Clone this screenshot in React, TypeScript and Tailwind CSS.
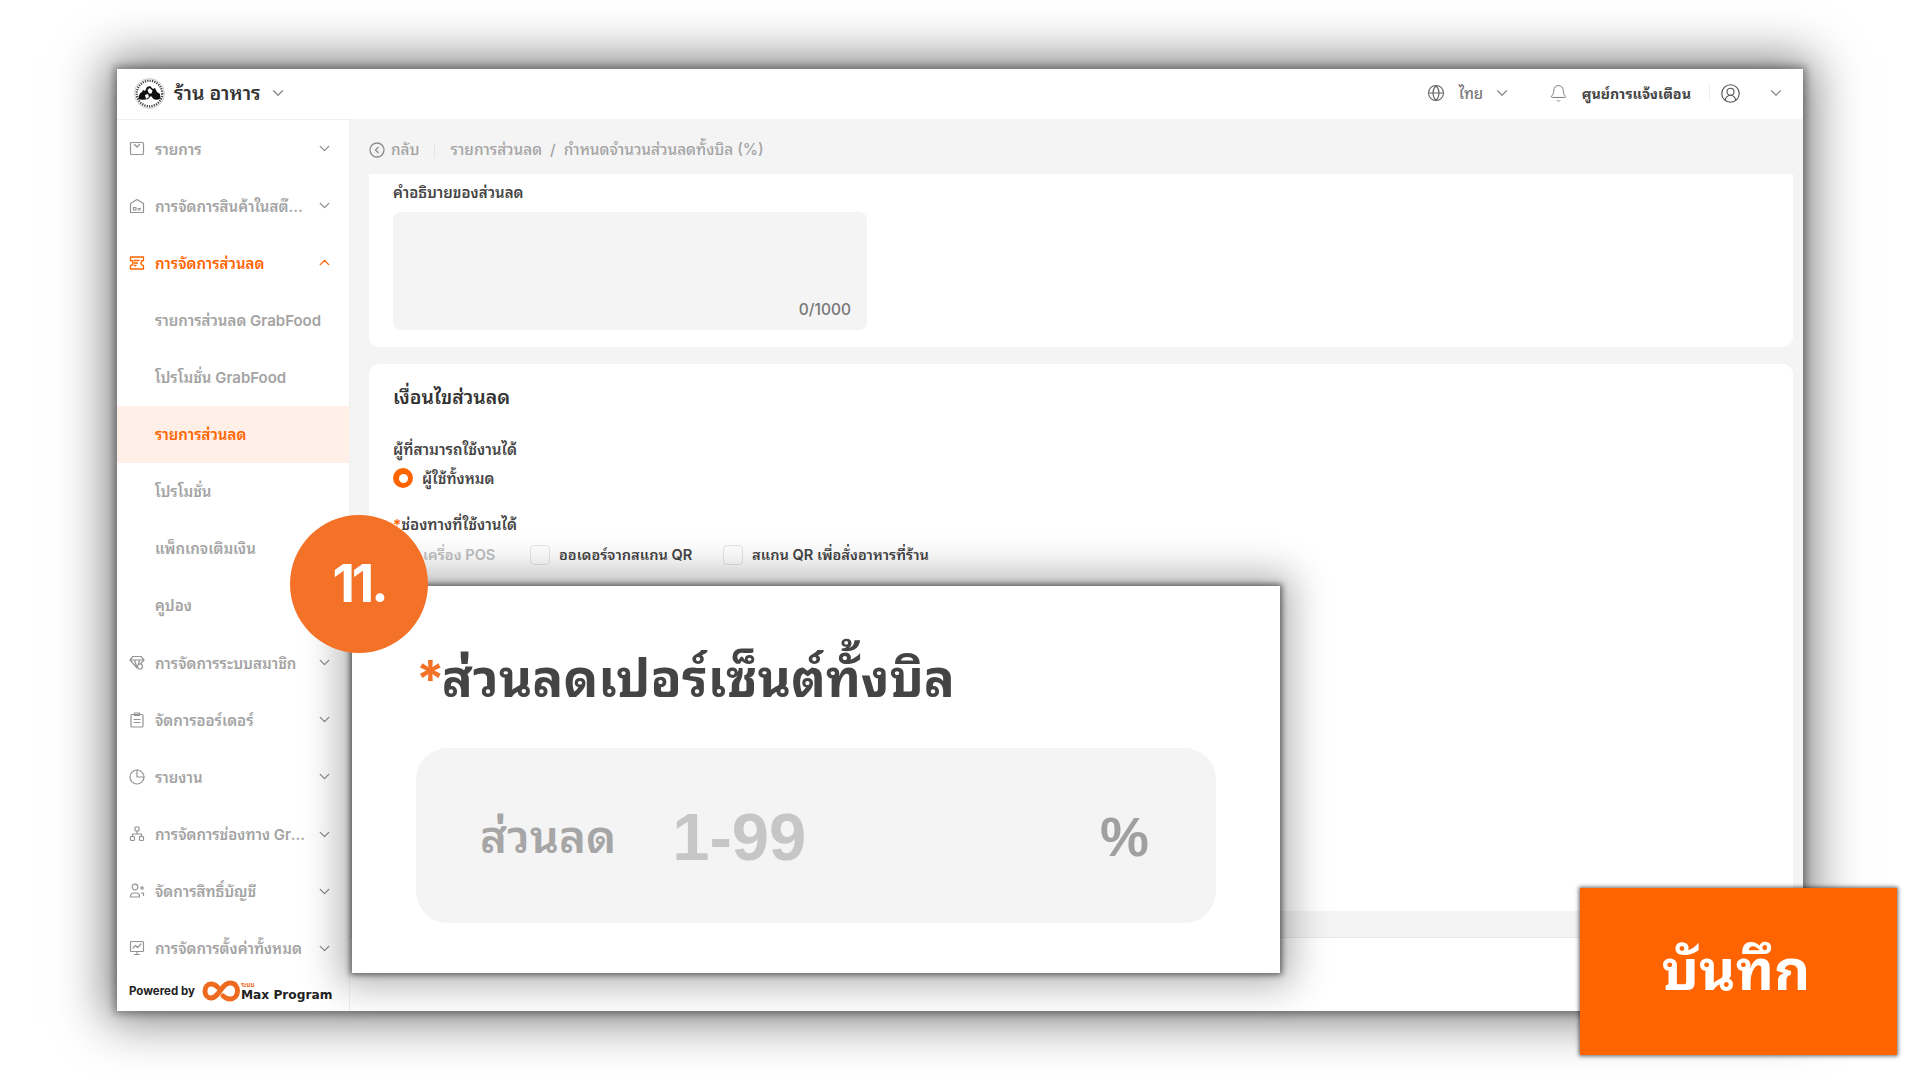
import React from "react";
import { ChevronDown, ChevronUp, Globe, Bell, CircleUserRound } from "lucide-react";

const ic = { width: 16, height: 16, viewBox: "0 0 16 16", fill: "none", stroke: "currentColor", strokeWidth: 1.2, strokeLinecap: "round" as const, strokeLinejoin: "round" as const };

const IconBox = () => (<svg {...ic}><rect x="1.5" y="1.5" width="13" height="12" rx="1" /><path d="M5.5 3.500 8 6l2.500-2.500" /></svg>);
const IconStore = () => (<svg {...ic}><path d="M1.500 5.500 8 1.500l6.500 4v9h-13z" /><path d="M4.500 9.500h2.500v2.500h-2.500zM9 10.500h2.500M9 12h2.500" /></svg>);
const IconTicket = () => (<svg {...ic} strokeWidth={1.3}><path d="M1.500 2h13v3.500a2.500 2.500 0 0 0 0 5V14h-13v-3.500a2.500 2.500 0 0 0 0-5z" /><path d="M5 5.500h5M5 8h3.500M5 10.500h2" /></svg>);
const IconGem = () => (<svg {...ic}><path d="M4 1.500h8l3 3.500-5 5.500-2 2.500L1 5zM1 5h14M5.500 5 8 13M10.500 5 9.500 9" /><circle cx="11" cy="11.500" r="2.500" fill="#fff" /></svg>);
const IconClip = () => (<svg {...ic}><rect x="2" y="2.500" width="12" height="12.500" rx="1" /><path d="M5.500 1h5v2.500h-5zM5 7.500h6M5 10.500h6" /></svg>);
const IconPie = () => (<svg {...ic}><circle cx="8" cy="8" r="7" /><path d="M8 1v7h7" /></svg>);
const IconNet = () => (<svg {...ic}><rect x="6" y="1" width="4" height="4" rx="0.800" /><rect x="1.500" y="10.500" width="4" height="4" rx="0.800" /><rect x="10.500" y="10.500" width="4" height="4" rx="0.800" /><path d="M8 5v3M3.500 10.500V8h9v2.500" /></svg>);
const IconUsers = () => (<svg {...ic}><circle cx="6" cy="4" r="2.800" /><path d="M1.500 14v-1a3 3 0 0 1 3-3h3a3 3 0 0 1 3 3v1z" /><circle cx="13" cy="5" r="1.200" /><path d="M12.500 10h2v2.500" /></svg>);
const IconMon = () => (<svg {...ic}><rect x="1.500" y="1.500" width="13" height="10" rx="1" /><path d="M4 8l2.500-2.500L8.500 7.500l3.500-3.500M5.500 14.500h5M8 11.500v3" /></svg>);

type Item = { label: string; icon?: React.ReactNode; open?: boolean; active?: boolean; sub?: boolean; selected?: boolean };

const items: Item[] = [
  { label: "รายการ", icon: <IconBox /> },
  { label: "การจัดการสินค้าในสต๊อก", icon: <IconStore /> },
  { label: "การจัดการส่วนลด", icon: <IconTicket />, open: true, active: true },
  { label: "รายการส่วนลด GrabFood", sub: true },
  { label: "โปรโมชั่น GrabFood", sub: true },
  { label: "รายการส่วนลด", sub: true, selected: true },
  { label: "โปรโมชั่น", sub: true },
  { label: "แพ็กเกจเติมเงิน", sub: true },
  { label: "คูปอง", sub: true },
  { label: "การจัดการระบบสมาชิก", icon: <IconGem /> },
  { label: "จัดการออร์เดอร์", icon: <IconClip /> },
  { label: "รายงาน", icon: <IconPie /> },
  { label: "การจัดการช่องทาง GrabFood", icon: <IconNet /> },
  { label: "จัดการสิทธิ์บัญชี", icon: <IconUsers /> },
  { label: "การจัดการตั้งค่าทั้งหมด", icon: <IconMon /> },
];

function SideRow({ item }: { item: Item }) {
  if (item.sub) {
    return (
      <div className={`flex h-[57.14px] shrink-0 items-center pl-[38px] text-[15px] font-semibold ${item.selected ? "bg-[#ffefe6] text-[#ff6400]" : "text-[#a3a3a3]"}`}>
        <span className="translate-y-[0.5px]">{item.label}</span>
      </div>
    );
  }
  return (
    <div className={`flex h-[57.14px] shrink-0 items-center pl-[12px] pr-[16px] text-[15px] font-semibold ${item.active ? "text-[#ff6400]" : "text-[#a3a3a3]"}`}>
      <span className={`flex w-[26px] shrink-0 ${item.active ? "" : "text-[#949494]"}`}>{item.icon}</span>
      <span className="mr-[10.500px] min-w-0 flex-1 translate-y-[0.5px] truncate leading-[24px]">{item.label}</span>
      {item.open ? <ChevronUp size={17} strokeWidth={1.9} /> : <ChevronDown size={17} strokeWidth={1.9} className="text-[#8c8c8c]" />}
    </div>
  );
}

function Logo() {
  return (
    <svg width="31" height="31" viewBox="0 0 31 31">
      <circle cx="15.500" cy="15.500" r="15" fill="#fff" stroke="#aaa" strokeWidth="0.600" />
      <circle cx="15.500" cy="15.500" r="12.800" fill="none" stroke="#444" strokeWidth="2.200" strokeDasharray="1.300 1.100" />
      <path d="M4.500 21c0-3 1-6 3.500-7l1-2 2 1 2-4 3-1 3 3 2-1 2 4 3 2 .5 4.500c-2.500 1.500-5 1.500-7 .5l-2.500-3-3 3c-3 1-7 1-10.500 0z" fill="#111" />
      <path d="M13.500 12l2-2 3 2.500-1 3-2.500 0zM11 17l3-1 1 3-3 2z" fill="#fff" />
    </svg>
  );
}

function MaxLogo() {
  return (
    <svg width="38" height="22" viewBox="0 0 38 22">
      <path d="M15.500 7C13.500 5 11.500 4 9 4c-3.500 0-6 3-6 7s2.500 7 6 7c4 0 6.500-3.500 9-7s5-8 10-8 7.500 3.500 7.500 8-3 8-7.500 8c-3 0-5-1.200-7-3" fill="none" stroke="#ee6a1f" strokeWidth="5" strokeLinecap="round" />
    </svg>
  );
}

export default function App() {
  return (
    <div className="relative h-[1080px] w-[1920px] overflow-hidden bg-white pl-[117px] pt-[69px] font-['Inter','Noto_Sans_Thai_Looped','Loma','Garuda','Noto_Sans_Thai','Noto_Sans','Noto_Sans_CJK_SC',sans-serif]">
      {/* application window */}
      <div className="flex h-[942px] w-[1686px] flex-col overflow-hidden bg-white shadow-[0_0_8px_3px_rgba(0,0,0,0.35),0_0_46px_10px_rgba(0,0,0,0.5)]">
        <header className="flex h-[50px] shrink-0 items-center pb-[2px] pl-[17px] pr-[18px]">
          <Logo />
          <span className="ml-[9px] translate-y-px text-[19.500px] font-semibold text-[#333]">ร้าน อาหาร</span>
          <ChevronDown size={18} strokeWidth={1.8} className="ml-[8px] text-[#8c8c8c]" />
          <div className="flex-1" />
          <Globe size={18} strokeWidth={1.5} className="text-[#666]" />
          <span className="ml-[14px] w-[23px] translate-y-px text-[15px] font-medium text-[#777]">ไทย</span>
          <ChevronDown size={18} strokeWidth={1.6} className="ml-[11px] text-[#8c8c8c]" />
          <Bell size={19} strokeWidth={1.2} className="ml-[38px] text-[#777]" />
          <span className="ml-[14px] translate-y-px text-[14.300px] font-bold text-[#444]">ศูนย์การแจ้งเตือน</span>
          <span className="ml-[18px] h-[18px] w-px bg-[#eeeeee]" />
          <CircleUserRound size={21} strokeWidth={1.3} className="ml-[10px] text-[#555]" />
          <ChevronDown size={18} strokeWidth={1.6} className="ml-[26px] text-[#8c8c8c]" />
        </header>
        <div className="flex min-h-0 flex-1">
          <aside className="flex w-[233px] shrink-0 flex-col border-r border-[#f0f0f0] pt-px shadow-[inset_0_1px_0_#f0f0f0]">
            {items.map((it) => (
              <SideRow key={it.label} item={it} />
            ))}
            <div className="flex flex-1 items-center pb-[5px] pl-[12px]">
              <span className="text-[11.5px] font-bold text-[#222]">Powered by</span>
              <span className="ml-[7px] flex items-center">
                <MaxLogo />
                <span className="ml-[1px] flex flex-col font-['DejaVu_Sans','Noto_Sans_Thai_Looped',sans-serif] leading-none">
                  <span className="text-[6px] font-bold text-[#ee6a1f]">ระบบ</span>
                  <span className="mt-[1px] whitespace-nowrap text-[12.200px] font-bold text-[#222]">Max Program</span>
                </span>
              </span>
            </div>
          </aside>
          <main className="flex min-w-0 flex-1 flex-col bg-[#f4f4f4]">
            <div className="flex h-[55px] shrink-0 items-center pl-[19px] pt-[7px] text-[15.300px] font-medium text-[#a3a3a3]">
              <svg width="16" height="16" viewBox="0 0 16 16" fill="none" stroke="#8c8c8c" strokeWidth="1.300"><circle cx="8" cy="8" r="7" /><path d="M9.500 5 6.500 8l3 3" /></svg>
              <span className="ml-[6px]">กลับ</span>
              <span className="mx-[15px] h-[15px] w-px bg-[#e5e5e5]" />
              <span>รายการส่วนลด</span>
              <span className="mx-[8px]">/</span>
              <span>กำหนดจำนวนส่วนลดทั้งบิล (%)</span>
            </div>
            <div className="ml-[19px] mr-[10px] h-[173px] shrink-0 rounded-b-[10px] bg-white px-[24px] pt-[9px]">
              <div className="text-[15px] font-semibold leading-[20px] text-[#444]">คำอธิบายของส่วนลด</div>
              <div className="mt-[9px] flex h-[118px] w-[474px] items-end justify-end rounded-[8px] bg-[#f4f4f4] px-[16px] pb-[9px] text-[15.500px] font-medium text-[#777]">0/1000</div>
            </div>
            <div className="ml-[19px] mr-[10px] mt-[17px] flex h-[547px] shrink-0 flex-col rounded-t-[10px] bg-white px-[24px] pt-[20px]">
              <div className="text-[19.400px] font-semibold leading-[26px] text-[#333]">เงื่อนไขส่วนลด</div>
              <div className="mt-[30px] text-[15.200px] font-semibold leading-[20px] text-[#444]">ผู้ที่สามารถใช้งานได้</div>
              <div className="mt-[8px] flex items-center">
                <span className="flex h-[20px] w-[20px] items-center justify-center rounded-full bg-[#ff6400]"><span className="h-[9px] w-[9px] rounded-full bg-white" /></span>
                <span className="ml-[9px] translate-y-px text-[15px] font-semibold leading-[20px] text-[#444]">ผู้ใช้ทั้งหมด</span>
              </div>
              <div className="mt-[27px] flex text-[15.200px] font-semibold leading-[20px] text-[#444]"><span className="text-[#ff6400]">*</span><span>ช่องทางที่ใช้งานได้</span></div>
              <div className="mt-[10px] flex items-center text-[14.600px] font-semibold leading-[20px] text-[#444]">
                <span className="ml-[30px] w-[107px] text-[#bfbfbf]">เครื่อง POS</span>
                <span className="h-[20px] w-[20px] rounded-[4px] border border-[#e5e5e5]" />
                <span className="ml-[9px] w-[135px]">ออเดอร์จากสแกน QR</span>
                <span className="ml-[29px] h-[20px] w-[20px] rounded-[4px] border border-[#e5e5e5]" />
                <span className="ml-[9px]">สแกน QR เพื่อสั่งอาหารที่ร้าน</span>
              </div>
            </div>
            <div className="flex-1" />
            <div className="flex h-[74px] shrink-0 items-center justify-end border-t border-[#e8e8e8] bg-white pr-[100px]">
              <span className="h-[42px] w-[120px] rounded-[8px] border border-[#e5e5e5]" />
            </div>
          </main>
        </div>
      </div>

      {/* enlarged callout */}
      <div className="absolute left-[352px] top-[586px] flex h-[387px] w-[928px] flex-col bg-white pl-[64px] pr-[64px] shadow-[0_0_6px_2px_rgba(0,0,0,0.55),0_0_36px_12px_rgba(0,0,0,0.3)]">
        <div className="mt-[54px] flex h-[76px] items-center text-[51.400px] font-bold leading-[76px] text-[#444]">
          <span className="text-[#f47228]">*</span>
          <span className="-ml-[3px]">ส่วนลดเปอร์เซ็นต์ทั้งบิล</span>
        </div>
        <div className="mt-[32px] flex h-[175px] items-center rounded-[32px] bg-[#f4f4f4] pl-[64px] pr-[67px] pt-[4px] text-[45.600px]">
          <span className="font-semibold text-[#a6a6a6]">ส่วนลด</span>
          <span className="ml-[56px] font-['Liberation_Sans',sans-serif] text-[67px] font-bold text-[#c6c6c6]">1-99</span>
          <span className="ml-auto font-['Liberation_Sans',sans-serif] text-[55px] font-bold text-[#a0a0a0]">%</span>
        </div>
      </div>

      {/* step badge */}
      <div className="absolute left-[290px] top-[515px] flex h-[138px] w-[138px] items-center justify-center rounded-full bg-[#f47228] text-[52px] font-bold tracking-[-3px] text-white">11.</div>

      {/* save button callout */}
      <div className="absolute left-[1580px] top-[888px] flex h-[167px] w-[317px] items-center justify-center bg-[#ff6400] pb-[4px] pr-[5px] text-[56px] font-bold text-white shadow-[0_0_4px_1px_rgba(0,0,0,0.6)]">บันทึก</div>
    </div>
  );
}
